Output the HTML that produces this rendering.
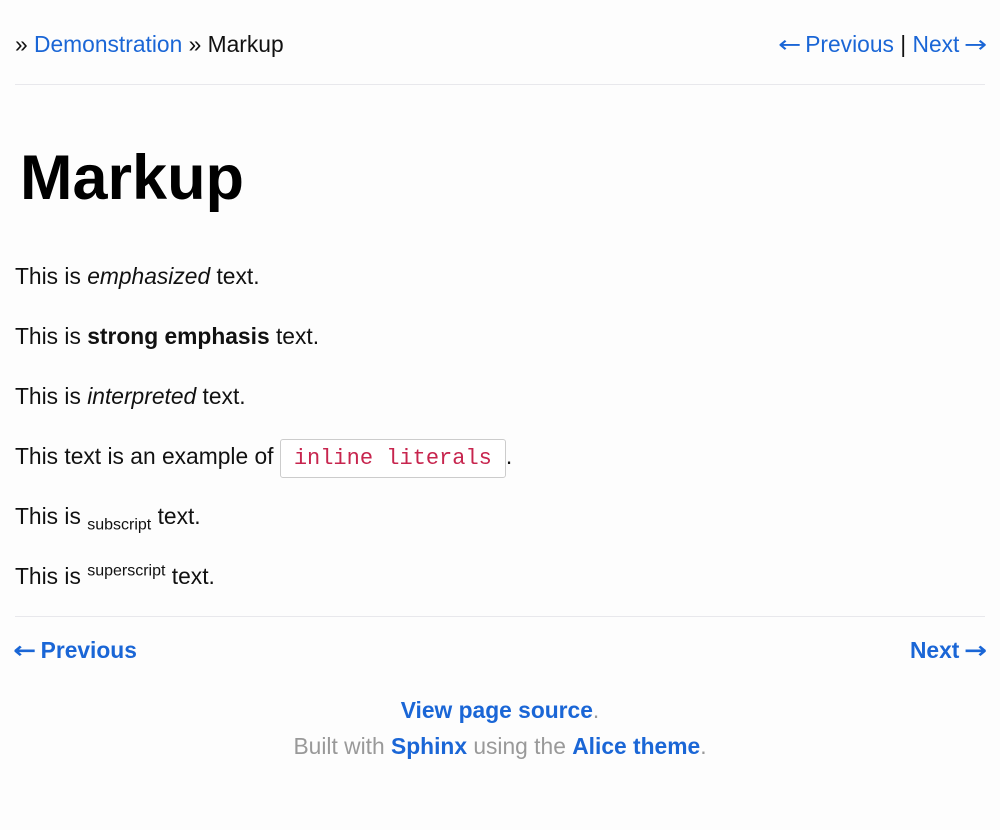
<!DOCTYPE html>
<html><head><meta charset="utf-8"><style>
body{margin:0;background:#fdfdfd;font-family:"Liberation Sans",sans-serif;color:#111;font-size:22.8px;width:1000px;height:830px;position:relative;overflow:hidden}
a{color:#1a66d6;text-decoration:none;font-weight:bold}
.ar{font-family:"DejaVu Sans",sans-serif;font-size:23px;display:inline-block;transform:scaleX(1.2)}
.l{position:absolute;left:15px;line-height:30px;white-space:nowrap}
.r{position:absolute;right:15px;line-height:30px;white-space:nowrap}
hr{position:absolute;left:15px;width:970px;margin:0;border:0;border-top:1px solid #e8e8ec}
code{font-family:"Liberation Mono",monospace;color:#c7254e;border:1px solid #ccc;border-radius:3px;padding:6px 13px;background:#fff;font-size:22px}
sub,sup{font-size:16px;line-height:0}
.c{position:absolute;left:0;width:1000px;text-align:center;line-height:30px;color:#999}
</style></head><body>
<div class="l" style="top:29px">» <a href="#" style="font-weight:normal">Demonstration</a> » Markup</div>
<div class="r" style="top:29px"><a href="#" style="font-weight:normal"><span class="ar">←</span> Previous</a> | <a href="#" style="font-weight:normal">Next <span class="ar">→</span></a></div>
<hr style="top:84px">
<div class="l" style="top:140px;left:20px;font-size:63px;font-weight:bold;line-height:76px;color:#000">Markup</div>
<div class="l" style="top:261px">This is <em>emphasized</em> text.</div>
<div class="l" style="top:321px">This is <strong>strong emphasis</strong> text.</div>
<div class="l" style="top:381px">This is <em>interpreted</em> text.</div>
<div class="l" style="top:441px">This text is an example of <code>inline literals</code>.</div>
<div class="l" style="top:501px">This is <sub>subscript</sub> text.</div>
<div class="l" style="top:561px">This is <sup>superscript</sup> text.</div>
<hr style="top:616px">
<div class="l" style="top:635px"><a href="#"><span class="ar">←</span> Previous</a></div>
<div class="r" style="top:635px"><a href="#">Next <span class="ar">→</span></a></div>
<div class="c" style="top:695px"><a href="#">View page source</a>.</div>
<div class="c" style="top:731px">Built with <a href="#">Sphinx</a> using the <a href="#">Alice theme</a>.</div>
</body></html>
